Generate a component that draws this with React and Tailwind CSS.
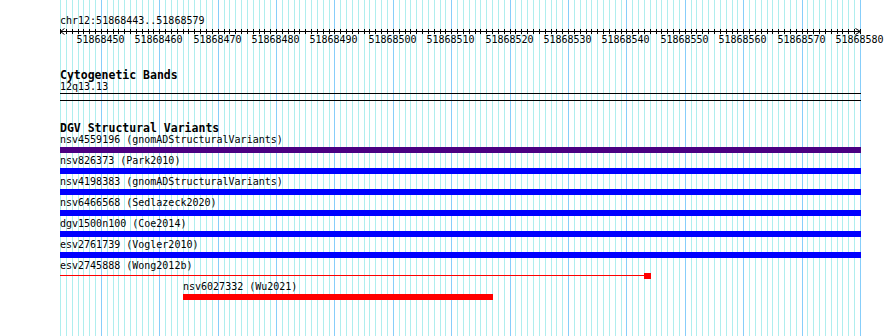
const START = 51868443
const END = 51868580
const LEFT = 60
const SPAN = 800
const bp = SPAN / (END - START)
const xOf = (pos) => LEFT + (pos - START) * bp

const mono = "font-['DejaVu_Sans_Mono','Liberation_Mono',monospace]"

const variants = [
    { name: 'nsv4559196 (gnomADStructuralVariants)', color: 'bg-[#4b0082]' },
    { name: 'nsv826373 (Park2010)', color: 'bg-[#0000ff]' },
    { name: 'nsv4198383 (gnomADStructuralVariants)', color: 'bg-[#0000ff]' },
    { name: 'nsv6466568 (Sedlazeck2020)', color: 'bg-[#0000ff]' },
    { name: 'dgv1500n100 (Coe2014)', color: 'bg-[#0000ff]' },
    { name: 'esv2761739 (Vogler2010)', color: 'bg-[#0000ff]' },
]

function Grid() {
    const lines = []
    for (let i = 0; i <= END - START; i++) {
        const x = Math.round(LEFT + i * bp) + 0.5
        const major = (START + i) % 10 === 0
        lines.push(
            <line key={i} x1={x} x2={x} y1={0} y2={336} stroke={major ? '#87cefa' : '#afeeee'} strokeWidth={1} />
        )
    }
    return (
        <svg className="absolute inset-0" width={890} height={336}>
            {lines}
        </svg>
    )
}

function Ruler() {
    const ticks = []
    const labels = []
    for (let i = 0; i <= END - START; i++) {
        const x = Math.round(LEFT + i * bp) + 0.5
        ticks.push(<line key={i} x1={x} x2={x} y1={2} y2={7} stroke="#000" strokeWidth={1} />)
        if ((START + i) % 10 === 0) {
            labels.push(
                <text key={i} x={x - 1} y={16} textAnchor="middle" fontSize={10} fontFamily="DejaVu Sans Mono, monospace" fill="#000">
                    {START + i}
                </text>
            )
        }
    }
    return (
        <svg className="block" width={890} height={20}>
            <line x1={60} x2={861} y1={4.5} y2={4.5} stroke="#000" strokeWidth={1} />
            <polyline points="64.5,1.5 60.5,4.5 64.5,7.5" fill="none" stroke="#000" strokeWidth={1} />
            <polyline points="855.5,1.5 860.5,4.5 855.5,7.5" fill="none" stroke="#000" strokeWidth={1} />
            {ticks}
            {labels}
        </svg>
    )
}

function Label({ children }) {
    return <div className="h-[12px] leading-[12px] text-[10px] whitespace-nowrap">{children}</div>
}

function Heading({ children }) {
    return <div className="h-[12px] leading-[12px] text-[11.5px] font-bold whitespace-nowrap">{children}</div>
}

export default function App() {
    const boxX = 644
    const wuStart = 183
    const wuEnd = 493

    return (
        <div className={`relative w-[890px] h-[336px] overflow-hidden bg-white text-black ${mono}`}>
            <Grid />

            <div className="relative flex flex-col pt-[15px]">
                <div className="pl-[60px]">
                    <Label>chr12:51868443..51868579</Label>
                </div>
                <Ruler />

                <div className="pl-[60px] w-[861px] flex flex-col">
                    <div className="mt-[22px]">
                        <Heading>Cytogenetic Bands</Heading>
                    </div>
                    <Label>12q13.13</Label>
                    <div className="h-px bg-black" />
                    <div className="h-px bg-black mt-[6px]" />

                    <div className="mt-[21px]">
                        <Heading>DGV Structural Variants</Heading>
                    </div>

                    {variants.map((v, i) => (
                        <div key={v.name} className={i === 0 ? '' : 'mt-[2px]'}>
                            <Label>{v.name}</Label>
                            <div className={`mt-px h-[6px] ${v.color}`} />
                        </div>
                    ))}

                    <div className="mt-[2px]">
                        <Label>esv2745888 (Wong2012b)</Label>
                        <div className="mt-px h-[6px] flex items-start">
                            <div className="mt-[2px] h-px bg-[#ff0000]" style={{ width: boxX - LEFT }} />
                            <div className="w-[7px] h-[6px] bg-[#ff0000]" />
                        </div>
                    </div>

                    <div className="mt-[2px]" style={{ marginLeft: wuStart - LEFT }}>
                        <Label>nsv6027332 (Wu2021)</Label>
                        <div className="mt-px h-[6px] bg-[#ff0000]" style={{ width: wuEnd - wuStart }} />
                    </div>
                </div>
            </div>
        </div>
    )
}
